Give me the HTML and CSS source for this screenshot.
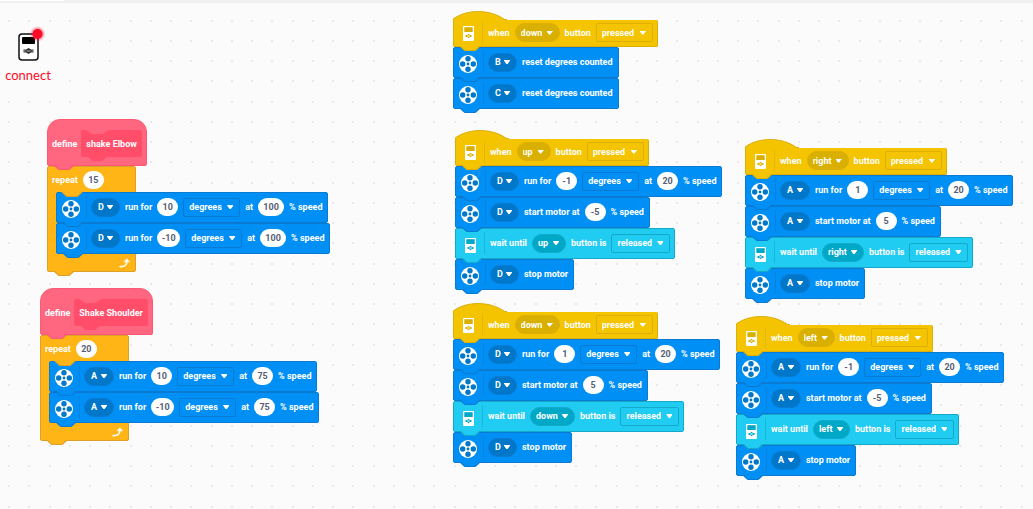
FILE: index.html
```html
<!DOCTYPE html>
<html lang="en">
<head>
<meta charset="utf-8">
<title>Motor program</title>
<link rel="stylesheet" href="styles.css">
</head>
<body>
<svg class="defs" aria-hidden="true">
  <symbol id="motor" viewBox="0 0 18 18">
    <circle cx="9" cy="9" r="9" fill="#fff"/>
    <g fill="#0077c9"><circle cx="9" cy="3.7" r="2.7"/><circle cx="9" cy="14.3" r="2.7"/><circle cx="3.7" cy="9" r="2.7"/><circle cx="14.3" cy="9" r="2.7"/><circle cx="9" cy="9" r="1.4"/></g>
  </symbol>
  <symbol id="hub" viewBox="0 0 11 15">
    <rect width="11" height="15" rx="1" fill="#fff"/>
    <rect x="1.3" y="1.2" width="8.400" height="4.800" fill="currentColor"/>
    <path d="M5.500 7.800 7 9H8.500V11H7L5.500 12.200 4 11H2.500V9H4Z" fill="currentColor"/>
    <rect x="4.300" y="9.500" width="2.400" height="1" fill="#fff"/>
  </symbol>
  <symbol id="loop" viewBox="0 0 12 10">
    <path d="M1.200 8.600C5 8.800 7.800 7.500 7.800 3.500" fill="none" stroke="#fff" stroke-width="1.700" stroke-linecap="round"/>
    <path d="M5 3.800 7.900.8 10.600 3.800Z" fill="#fff" stroke="#fff" stroke-width=".6" stroke-linejoin="round"/>
  </symbol>
  <symbol id="hat" viewBox="0 0 54 10">
    <path d="M0 10V8C14-2.200 37-2.200 52 8.500L54 10Z" fill="#f5c400"/>
    <path d="M.5 10V7.800C14-2 37-2 51.500 8.500H54" fill="none" stroke="#dcae07"/>
  </symbol>
</svg>
<header class="topbar"><span class="tab"></span></header>
<main class="canvas">
  <button class="connect" type="button">
    <svg class="brick" viewBox="0 0 28 36" aria-hidden="true">
      <defs><radialGradient id="glow"><stop offset=".5" stop-color="#ff1030" stop-opacity=".6"/><stop offset="1" stop-color="#ff1030" stop-opacity="0"/></radialGradient></defs>
      <rect x="1" y="9" width="19" height="26" rx="3" fill="#fff" stroke="#111" stroke-width="1.500"/>
      <rect x="4" y="12" width="13" height="7" rx="1" fill="#000"/>
      <path d="M10.500 23 13 24.500H15.500V27.500H13L10.500 29 8 27.500H5.500V24.500H8Z" fill="#333"/>
      <path d="M5 26H7.500M13.500 26H16M8.500 26H12.500" stroke="#aaa"/>
      <circle cx="19.500" cy="9" r="8" fill="url(#glow)"/>
      <circle cx="19.500" cy="9" r="5" fill="#ff0a28"/>
    </svg>
    <span>connect</span>
  </button>

  <section class="stack elbow">
    <div class="define tabbed"><span>define</span><span class="proto tabbed">shake Elbow</span></div>
    <div class="repeat tabbed">
      <div class="head tabbed"><span>repeat</span><input class="num" aria-label="Times" value="15"></div>
      <div class="inner">
        <div class="block motor tabbed"><svg><use href="#motor"/></svg><span class="pick pill"><select aria-label="Port"><option>D</option></select></span><span>run for</span><input class="num" aria-label="Amount" value="10"><span class="pick box"><select aria-label="Unit"><option>degrees</option></select></span><span>at</span><input class="num three" aria-label="Speed" value="100"><span>% speed</span></div>
        <div class="block motor tabbed"><svg><use href="#motor"/></svg><span class="pick pill"><select aria-label="Port"><option>D</option></select></span><span>run for</span><input class="num neg" aria-label="Amount" value="-10"><span class="pick box"><select aria-label="Unit"><option>degrees</option></select></span><span>at</span><input class="num three" aria-label="Speed" value="100"><span>% speed</span></div>
      </div>
      <div class="foot"><svg><use href="#loop"/></svg></div>
    </div>
  </section>

  <section class="stack shoulder">
    <div class="define tabbed"><span>define</span><span class="proto tabbed">Shake Shoulder</span></div>
    <div class="repeat tabbed">
      <div class="head tabbed"><span>repeat</span><input class="num" aria-label="Times" value="20"></div>
      <div class="inner">
        <div class="block motor tabbed"><svg><use href="#motor"/></svg><span class="pick pill"><select aria-label="Port"><option>A</option></select></span><span>run for</span><input class="num" aria-label="Amount" value="10"><span class="pick box"><select aria-label="Unit"><option>degrees</option></select></span><span>at</span><input class="num" aria-label="Speed" value="75"><span>% speed</span></div>
        <div class="block motor tabbed"><svg><use href="#motor"/></svg><span class="pick pill"><select aria-label="Port"><option>A</option></select></span><span>run for</span><input class="num neg" aria-label="Amount" value="-10"><span class="pick box"><select aria-label="Unit"><option>degrees</option></select></span><span>at</span><input class="num" aria-label="Speed" value="75"><span>% speed</span></div>
      </div>
      <div class="foot"><svg><use href="#loop"/></svg></div>
    </div>
  </section>

  <section class="stack reset">
    <svg class="hat" aria-hidden="true"><use href="#hat"/></svg>
    <div class="block event tabbed"><svg class="hub"><use href="#hub"/></svg><span>when</span><span class="pick pill"><select aria-label="Button"><option>down</option></select></span><span>button</span><span class="pick box"><select aria-label="State"><option>pressed</option></select></span></div>
    <div class="block motor tabbed"><svg><use href="#motor"/></svg><span class="pick pill"><select aria-label="Port"><option>B</option></select></span><span>reset degrees counted</span></div>
    <div class="block motor tabbed"><svg><use href="#motor"/></svg><span class="pick pill"><select aria-label="Port"><option>C</option></select></span><span>reset degrees counted</span></div>
  </section>

  <section class="stack up">
    <svg class="hat" aria-hidden="true"><use href="#hat"/></svg>
    <div class="block event tabbed"><svg class="hub"><use href="#hub"/></svg><span>when</span><span class="pick pill"><select aria-label="Button"><option>up</option></select></span><span>button</span><span class="pick box"><select aria-label="State"><option>pressed</option></select></span></div>
    <div class="block motor tabbed"><svg><use href="#motor"/></svg><span class="pick pill"><select aria-label="Port"><option>D</option></select></span><span>run for</span><input class="num" aria-label="Amount" value="-1"><span class="pick box"><select aria-label="Unit"><option>degrees</option></select></span><span>at</span><input class="num" aria-label="Speed" value="20"><span>% speed</span></div>
    <div class="block motor tabbed"><svg><use href="#motor"/></svg><span class="pick pill"><select aria-label="Port"><option>D</option></select></span><span>start motor at</span><input class="num" aria-label="Speed" value="-5"><span>% speed</span></div>
    <div class="block sensor tabbed"><svg class="hub"><use href="#hub"/></svg><span>wait until</span><span class="pick pill"><select aria-label="Button"><option>up</option></select></span><span>button is</span><span class="pick box"><select aria-label="State"><option>released</option></select></span></div>
    <div class="block motor tabbed"><svg><use href="#motor"/></svg><span class="pick pill"><select aria-label="Port"><option>D</option></select></span><span>stop motor</span></div>
  </section>

  <section class="stack down">
    <svg class="hat" aria-hidden="true"><use href="#hat"/></svg>
    <div class="block event tabbed"><svg class="hub"><use href="#hub"/></svg><span>when</span><span class="pick pill"><select aria-label="Button"><option>down</option></select></span><span>button</span><span class="pick box"><select aria-label="State"><option>pressed</option></select></span></div>
    <div class="block motor tabbed"><svg><use href="#motor"/></svg><span class="pick pill"><select aria-label="Port"><option>D</option></select></span><span>run for</span><input class="num" aria-label="Amount" value="1"><span class="pick box"><select aria-label="Unit"><option>degrees</option></select></span><span>at</span><input class="num" aria-label="Speed" value="20"><span>% speed</span></div>
    <div class="block motor tabbed"><svg><use href="#motor"/></svg><span class="pick pill"><select aria-label="Port"><option>D</option></select></span><span>start motor at</span><input class="num" aria-label="Speed" value="5"><span>% speed</span></div>
    <div class="block sensor tabbed"><svg class="hub"><use href="#hub"/></svg><span>wait until</span><span class="pick pill"><select aria-label="Button"><option>down</option></select></span><span>button is</span><span class="pick box"><select aria-label="State"><option>released</option></select></span></div>
    <div class="block motor tabbed"><svg><use href="#motor"/></svg><span class="pick pill"><select aria-label="Port"><option>D</option></select></span><span>stop motor</span></div>
  </section>

  <section class="stack right">
    <svg class="hat" aria-hidden="true"><use href="#hat"/></svg>
    <div class="block event tabbed"><svg class="hub"><use href="#hub"/></svg><span>when</span><span class="pick pill"><select aria-label="Button"><option>right</option></select></span><span>button</span><span class="pick box"><select aria-label="State"><option>pressed</option></select></span></div>
    <div class="block motor tabbed"><svg><use href="#motor"/></svg><span class="pick pill"><select aria-label="Port"><option>A</option></select></span><span>run for</span><input class="num" aria-label="Amount" value="1"><span class="pick box"><select aria-label="Unit"><option>degrees</option></select></span><span>at</span><input class="num" aria-label="Speed" value="20"><span>% speed</span></div>
    <div class="block motor tabbed"><svg><use href="#motor"/></svg><span class="pick pill"><select aria-label="Port"><option>A</option></select></span><span>start motor at</span><input class="num" aria-label="Speed" value="5"><span>% speed</span></div>
    <div class="block sensor tabbed"><svg class="hub"><use href="#hub"/></svg><span>wait until</span><span class="pick pill"><select aria-label="Button"><option>right</option></select></span><span>button is</span><span class="pick box"><select aria-label="State"><option>released</option></select></span></div>
    <div class="block motor tabbed"><svg><use href="#motor"/></svg><span class="pick pill"><select aria-label="Port"><option>A</option></select></span><span>stop motor</span></div>
  </section>

  <section class="stack left">
    <svg class="hat" aria-hidden="true"><use href="#hat"/></svg>
    <div class="block event tabbed"><svg class="hub"><use href="#hub"/></svg><span>when</span><span class="pick pill"><select aria-label="Button"><option>left</option></select></span><span>button</span><span class="pick box"><select aria-label="State"><option>pressed</option></select></span></div>
    <div class="block motor tabbed"><svg><use href="#motor"/></svg><span class="pick pill"><select aria-label="Port"><option>A</option></select></span><span>run for</span><input class="num" aria-label="Amount" value="-1"><span class="pick box"><select aria-label="Unit"><option>degrees</option></select></span><span>at</span><input class="num" aria-label="Speed" value="20"><span>% speed</span></div>
    <div class="block motor tabbed"><svg><use href="#motor"/></svg><span class="pick pill"><select aria-label="Port"><option>A</option></select></span><span>start motor at</span><input class="num" aria-label="Speed" value="-5"><span>% speed</span></div>
    <div class="block sensor tabbed"><svg class="hub"><use href="#hub"/></svg><span>wait until</span><span class="pick pill"><select aria-label="Button"><option>left</option></select></span><span>button is</span><span class="pick box"><select aria-label="State"><option>released</option></select></span></div>
    <div class="block motor tabbed"><svg><use href="#motor"/></svg><span class="pick pill"><select aria-label="Port"><option>A</option></select></span><span>stop motor</span></div>
  </section>
</main>
</body>
</html>
```
FILE: styles.css
```css
* { box-sizing: border-box; }

body {
  margin: 0;
  min-height: 100vh;
  display: flex;
  flex-direction: column;
  overflow: hidden;
  background: #fbfbfb;
  font: bold 9px/12px Roboto, "Open Sans", sans-serif;
  color: #fff;
}

.defs { position: absolute; width: 0; height: 0; }

.topbar { display: flex; height: 3px; background: #f0f0f0; }
.tab { width: 64px; height: 1px; background: #fff; border-bottom-right-radius: 2px; }

.canvas {
  position: relative;
  flex: 1;
  background: url("data:image/svg+xml,%3Csvg xmlns='http://www.w3.org/2000/svg' width='81' height='81' fill='%23e8e8e8'%3E%3Cdefs%3E%3Cg id='r'%3E%3Crect x='8' width='2' height='2'/%3E%3Crect x='28' width='2' height='2'/%3E%3Crect x='49' width='2' height='2'/%3E%3Crect x='69' width='2' height='2'/%3E%3C/g%3E%3C/defs%3E%3Cuse href='%23r' y='17'/%3E%3Cuse href='%23r' y='37'/%3E%3Cuse href='%23r' y='57'/%3E%3Cuse href='%23r' y='77'/%3E%3C/svg%3E");
}

.connect {
  display: flex;
  flex-direction: column;
  align-items: center;
  gap: 6px;
  width: 56px;
  margin-top: 22px;
  padding: 0;
  border: 0;
  background: #fbfbfb;
  color: #ff0a28;
  font: 13px/16px Lato, sans-serif;
}
.brick { width: 28px; height: 36px; margin-left: 8px; }

.stack {
  position: absolute;
  display: flex;
  flex-direction: column;
  align-items: flex-start;
  white-space: nowrap;
}
.elbow { left: 47px; top: 116px; }
.shoulder { left: 40px; top: 285px; }
.reset { left: 453px; top: 8px; }
.up { left: 455px; top: 127px; }
.down { left: 453px; top: 300px; }
.right { left: 745px; top: 136px; }
.left { left: 736px; top: 313px; }

/* Connector under a block: edge-coloured shape with the fill inset one pixel */
.tabbed { position: relative; }
.tabbed::before,
.tabbed::after {
  content: "";
  position: absolute;
  z-index: 2;
  clip-path: polygon(0 0, 100% 0, 80% 80%, 74% 100%, 26% 100%, 20% 80%);
}
.tabbed::before { left: 5px; bottom: -5px; width: 22px; height: 5px; background: var(--edge); }
.tabbed::after { left: 6px; bottom: -4px; width: 20px; height: 5px; background: var(--fill); }

.block {
  display: flex;
  align-items: center;
  gap: 5px;
  height: 31px;
  padding: 0 4px 1px 5px;
  border: 1px solid var(--edge);
  border-radius: 2px;
  background: var(--fill);
}
.block > svg { width: 18px; height: 18px; margin-top: 4px; flex: none; }
.block > .hub { width: 11px; height: 15px; margin: 4px 4px 0 4px; color: var(--dark); }
.block > svg + span { position: relative; margin-left: 5px; }
.block > svg + span::before {
  content: "";
  position: absolute;
  left: -6px;
  top: 50%;
  width: 1px;
  height: 22px;
  margin-top: -11px;
  background: var(--edge);
  opacity: .6;
}

.motor { --fill: #0090f5; --edge: #0b7ad2; --dark: #0077c9; padding-right: 5px; }
.motor > svg + span { margin-left: 6px; }
.event { --fill: #f5c400; --edge: #dcae07; --dark: #d9b000; height: 27px; border-top: 0; }
.event > .hub { margin-top: 1px; }
.sensor { --fill: #20ccf2; --edge: #14a9c9; --dark: #00a8c8; }

.hat { width: 54px; height: 10px; margin-bottom: -1px; z-index: 1; }

.pick { display: flex; align-items: center; position: relative; height: 19px; border: 1px solid var(--edge); }
.pick::after {
  content: "";
  position: absolute;
  right: 6px;
  width: 6px;
  height: 4px;
  background: #fff;
  clip-path: polygon(0 0, 100% 0, 100% 20%, 60% 100%, 40% 100%, 0 20%);
  pointer-events: none;
}
.pill { border-radius: 10px; background: var(--dark); }
.box { border-radius: 2px; }
select {
  appearance: none;
  height: 17px;
  padding: 0 16px 0 5px;
  border: 0;
  background: none;
  color: #fff;
  font: inherit;
}
.box select { padding-right: 17px; }
.motor .pill select { padding: 0 15px 0 6px; }

.num {
  width: 21px;
  height: 18px;
  padding: 0;
  border: 0;
  border-radius: 9px;
  background: #fff;
  color: #575e75;
  font: inherit;
  text-align: center;
}
.neg { width: 23px; }
.three { width: 26px; }

.define {
  --fill: #ff6680;
  --edge: #ff5872;
  display: flex;
  align-items: center;
  gap: 4px;
  height: 47px;
  padding: 2px 4px 0;
  border: 1px solid var(--edge);
  border-radius: 13px 13px 2px 2px;
  background: var(--fill);
}
.proto {
  --fill: #ff4d6a;
  height: 27px;
  padding: 8px 5px 0;
  border-radius: 2px;
  background: var(--fill);
}
.proto::before { top: 0; bottom: auto; height: 4px; background: #ff6680; }

.repeat {
  --fill: #ffb515;
  --edge: #dfa02a;
  display: flex;
  flex-direction: column;
  width: 89px;
  border: 1px solid var(--edge);
  border-radius: 2px;
  background: var(--fill);
}
.head { display: flex; align-items: center; gap: 5px; height: 25px; padding-left: 4px; }
.head::before { left: 13px; }
.head::after { left: 14px; }
.inner { display: flex; flex-direction: column; align-items: flex-start; margin-left: 8px; }
.foot { display: flex; justify-content: flex-end; align-items: center; height: 17px; padding-right: 4px; }
.foot svg { width: 12px; height: 10px; }
```
